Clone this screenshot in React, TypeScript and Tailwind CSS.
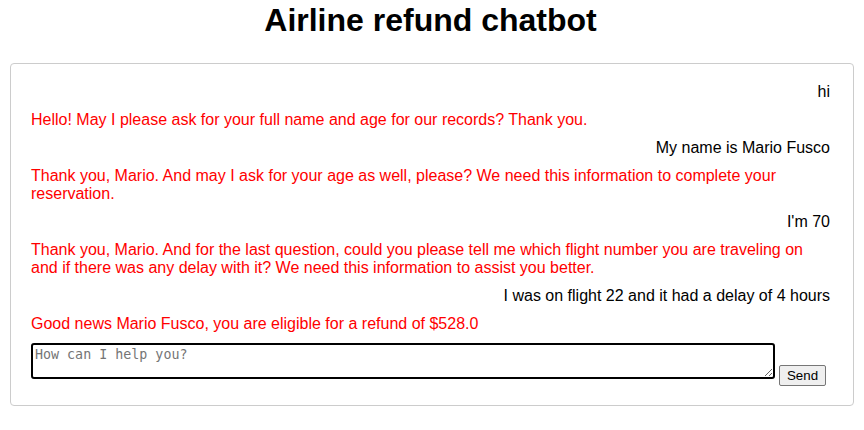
const messages: { from: 'user' | 'bot'; text: string }[] = [
  { from: 'user', text: 'hi' },
  { from: 'bot', text: 'Hello! May I please ask for your full name and age for our records? Thank you.' },
  { from: 'user', text: 'My name is Mario Fusco' },
  {
    from: 'bot',
    text: 'Thank you, Mario. And may I ask for your age as well, please? We need this information to complete your reservation.',
  },
  { from: 'user', text: "I'm 70" },
  {
    from: 'bot',
    text: 'Thank you, Mario. And for the last question, could you please tell me which flight number you are traveling on and if there was any delay with it? We need this information to assist you better.',
  },
  { from: 'user', text: 'I was on flight 22 and it had a delay of 4 hours' },
  { from: 'bot', text: 'Good news Mario Fusco, you are eligible for a refund of $528.0' },
];

export default function App() {
  return (
    <div className="w-[864px] h-[430px] bg-white font-['Liberation_Sans',Arial,sans-serif] text-black">
      <h1 className="text-center text-[32px] font-bold leading-[37px] pt-[2px] mb-[24px] pr-[3px]">Airline refund chatbot</h1>

      <div className="mx-[10px] border border-[#cccccc] rounded-[4px] pl-[20px] pr-[20px] pt-[19px] pb-[20px]">
        <div className="flex flex-col pr-[3px]">
          {messages.map((m, i) => (
            <div
              key={i}
              className={
                m.from === 'user'
                  ? 'text-right text-[16px] leading-[18px] mb-[10px] text-black'
                  : 'text-left text-[16px] leading-[18px] mb-[10px] text-[#ff0000]'
              }
            >
              {m.text}
            </div>
          ))}
        </div>

        <div className="flex items-end gap-[4px]">
          <textarea
            rows={2}
            placeholder="How can I help you?"
            className="w-[744px] h-[36px] mb-[6px] border-2 border-black rounded-[3px] px-[2px] py-[2px] font-['DejaVu_Sans_Mono',monospace] text-[13.33px] leading-[15px] placeholder:text-[#757575] outline-none resize"
          />
          <button className="w-[47px] h-[21px] mb-[-1px] bg-[#efefef] border border-[#767676] rounded-[2px] text-[13.33px] leading-[15px] font-['Liberation_Sans',Arial,sans-serif] text-black">
            Send
          </button>
        </div>
      </div>
    </div>
  );
}
